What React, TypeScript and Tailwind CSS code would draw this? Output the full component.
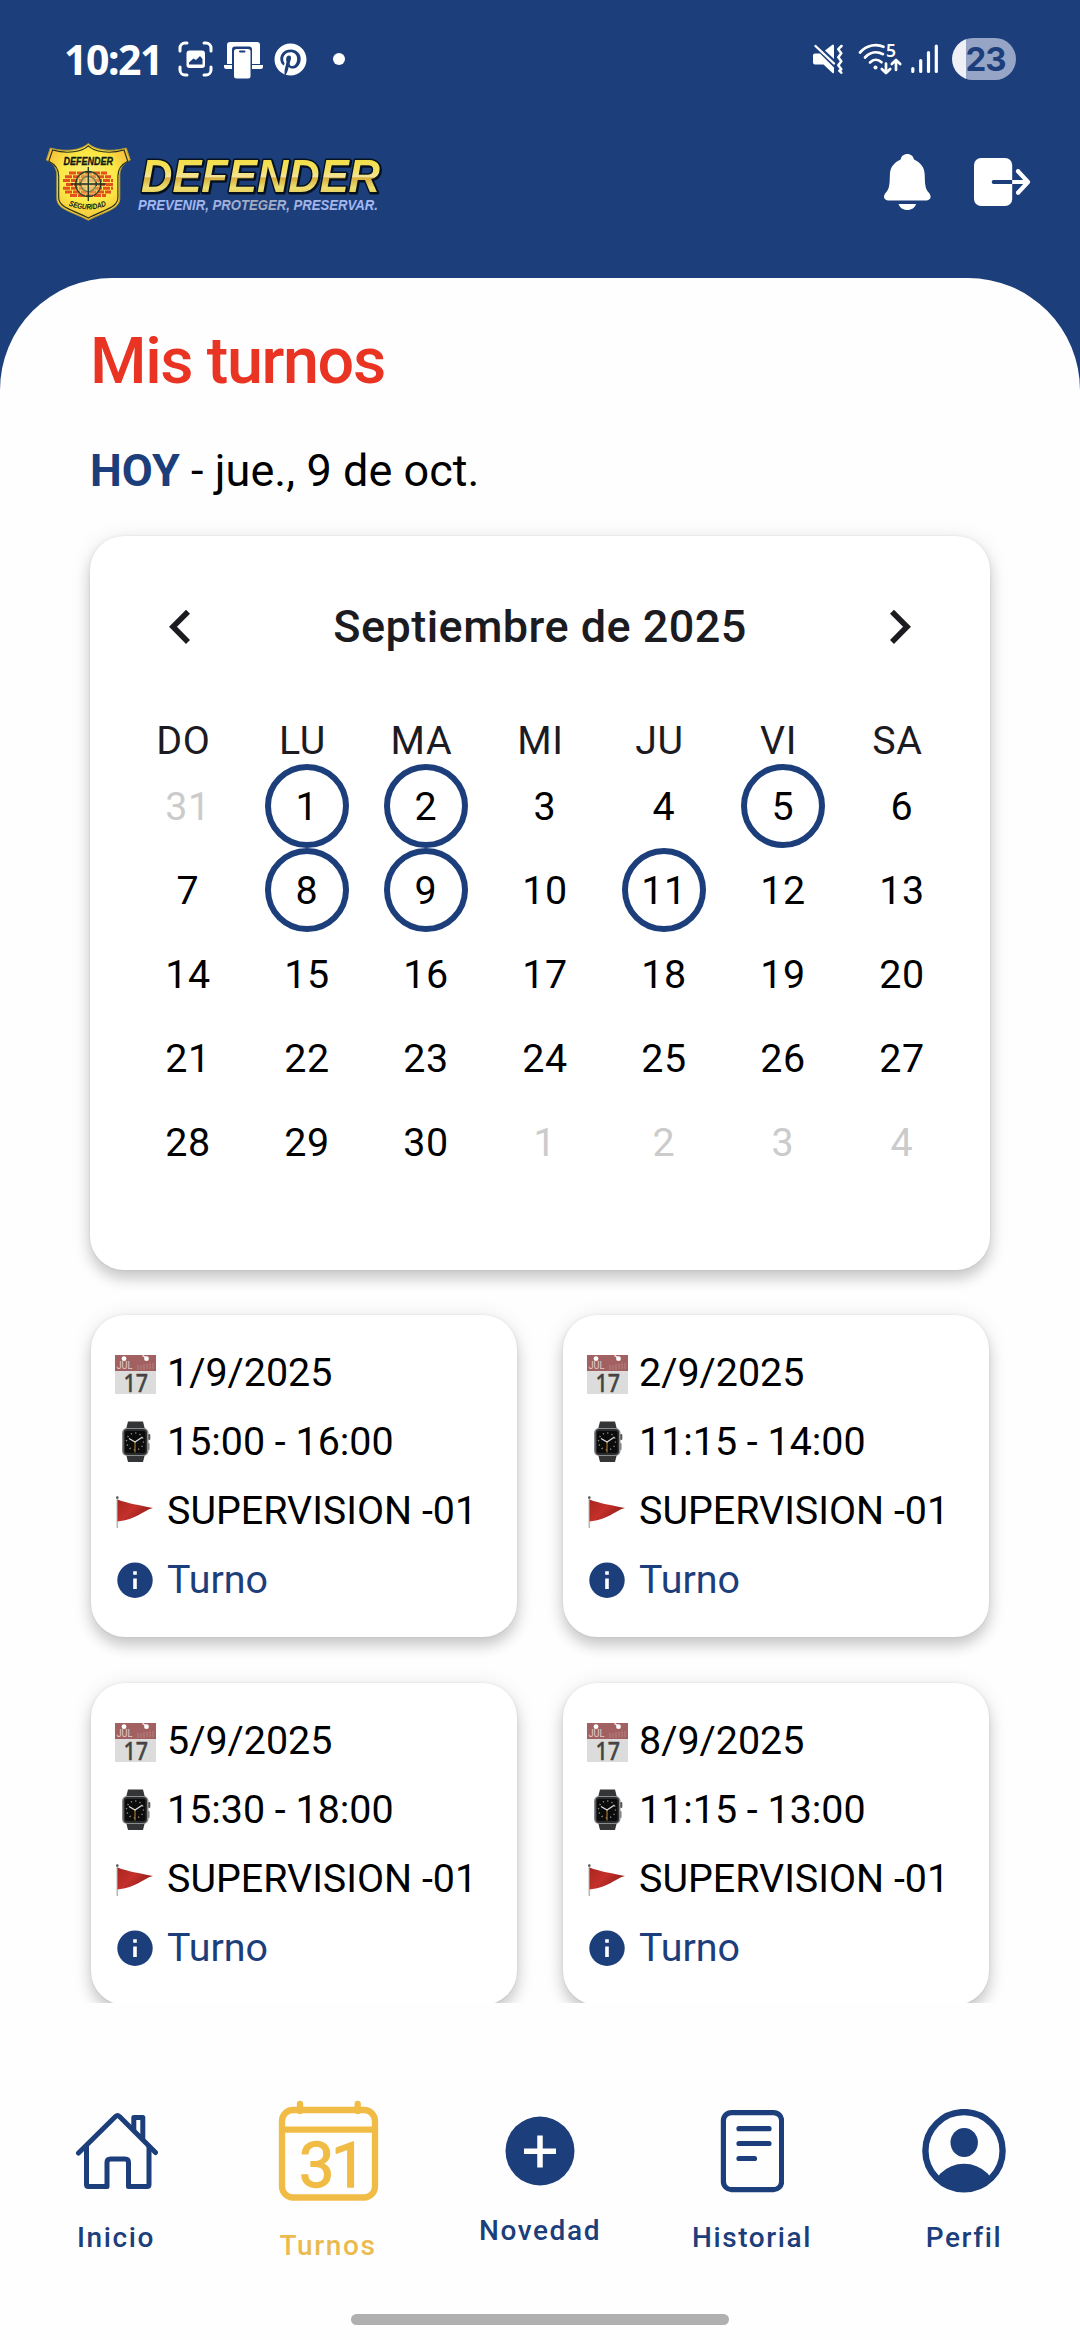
import type { ReactNode } from "react";
import { FaPinterest } from "react-icons/fa";

const NAVY = "#1c3e7b";
const GOLD = "#f0bc45";

const weekdays = ["DO", "LU", "MA", "MI", "JU", "VI", "SA"];
const marked = [1, 2, 5, 8, 9, 11];

type Day = { n: number; muted: boolean };
const days: Day[] = [
  { n: 31, muted: true },
  ...Array.from({ length: 30 }, (_, i) => ({ n: i + 1, muted: false })),
  ...Array.from({ length: 4 }, (_, i) => ({ n: i + 1, muted: true })),
];

const shifts = [
  { date: "1/9/2025", time: "15:00 - 16:00", place: "SUPERVISION -01" },
  { date: "2/9/2025", time: "11:15 - 14:00", place: "SUPERVISION -01" },
  { date: "5/9/2025", time: "15:30 - 18:00", place: "SUPERVISION -01" },
  { date: "8/9/2025", time: "11:15 - 13:00", place: "SUPERVISION -01" },
];

function ScreenshotIcon() {
  return (
    <svg width="36" height="36" viewBox="0 0 36 36" fill="none" stroke="#fff" strokeWidth="3" strokeLinecap="round">
      <path d="M2 10V7a5 5 0 0 1 5-5h2M26 2h2a5 5 0 0 1 5 5v3M33 26v3a5 5 0 0 1-5 5h-2M9 34H7a5 5 0 0 1-5-5v-3" />
      <rect x="8.500" y="9.500" width="18.500" height="17.500" rx="3" fill="#fff" stroke="none" />
      <path d="M11 23.500v-2l4.500-4 2.500 1.500 4-4 2.500 3v5.500z" fill={NAVY} stroke="none" />
    </svg>
  );
}

function LinkDeviceIcon() {
  return (
    <svg width="40" height="38" viewBox="0 0 40 38">
      <path d="M3 3a3 3 0 0 1 3-3h27a3 3 0 0 1 3 3v19H3z" fill="#fff" />
      <path d="M0 23h39v1.500a2.500 2.500 0 0 1-2.500 2.500h-34A2.500 2.500 0 0 1 0 24.500z" fill="#fff" />
      <rect x="8" y="4.500" width="20" height="34" rx="3" fill={NAVY} />
      <rect x="10" y="7" width="16.500" height="29.500" rx="2.500" fill="#fff" />
      <rect x="15" y="8.500" width="6.500" height="2" rx="1" fill={NAVY} />
    </svg>
  );
}

function MuteVibrateIcon() {
  return (
    <svg width="30" height="30" viewBox="0 0 30 30">
      <path d="M0 11.500a2 2 0 0 1 2-2h5L21 23.500v4.800a.9.900 0 0 1-1.500.700L10.500 20.500H2a2 2 0 0 1-2-2z" fill="#fff" />
      <path d="M12 6.500 19.400.800A1 1 0 0 1 21 1.500V15z" fill="#fff" />
      <path d="M2.500 2 21 19.500" stroke="#fff" strokeWidth="2.400" strokeLinecap="round" />
      <path d="M28.500 2l-3.200 3.200 3 4-3 4 3 4-3 4 3 4-2 1.500 2 2" stroke="#fff" strokeWidth="2.500" fill="none" strokeLinecap="round" strokeLinejoin="round" />
    </svg>
  );
}

function WifiIcon() {
  return (
    <svg width="44" height="32" viewBox="0 0 44 32" fill="none" stroke="#fff" strokeWidth="2.700" strokeLinecap="round" strokeLinejoin="round" className="overflow-visible">
      <path d="M2 9.500C9 1.500 19 .800 25.500 3.800M7 14.500c5-5.500 12-6.500 18-3.300M12 19.500c3.500-3.500 8-3.500 11.500-.300" />
      <circle cx="17.500" cy="24.500" r="2" fill="#fff" stroke="none" />
      <path d="M28 20.500v9M23.800 26l4.200 4 4.200-4M38 27V17.500M33.800 21l4.200-4 4.200 4" />
      <text x="28" y="14" fontFamily="Noto Sans" fontWeight="600" fontSize="17.500" fill="#fff" stroke="none">5</text>
    </svg>
  );
}

function SignalIcon() {
  return (
    <svg width="28" height="30" viewBox="0 0 28 30" stroke="#fff" strokeWidth="3.200" strokeLinecap="round">
      <path d="M1.800 24.500V27.400M9.700 16.500V27.400M17.500 8.500V27.400M25.300 2V27.400" />
    </svg>
  );
}

function BrandLogo() {
  const shield =
    "M88.300 143.500c-7 6.500-22 9-38 4.500l-4 12c7 3.500 10.500 8 10.500 15.500v23c0 11 15 13 31.500 21.800 16.500-8.800 31.500-10.800 31.500-21.800v-23c0-7.500 3.500-12 10.500-15.500l-4-12c-16 4.500-31 2-38-4.500z";
  return (
    <svg width="344" height="84" viewBox="44 140 344 84">
      <defs>
        <radialGradient id="shield" cx="50%" cy="45%" r="60%">
          <stop offset="0" stopColor="#fbf08a" />
          <stop offset=".55" stopColor="#fbe845" />
          <stop offset="1" stopColor="#f3b63a" />
        </radialGradient>
        <linearGradient id="gold" x1="0" y1="0" x2="0" y2="1">
          <stop offset=".15" stopColor="#f3df45" />
          <stop offset=".4" stopColor="#f4e06a" />
          <stop offset=".5" stopColor="#f3e49b" />
          <stop offset=".53" stopColor="#d8ae3e" />
          <stop offset=".72" stopColor="#ecdf70" />
          <stop offset="1" stopColor="#e0b43c" />
        </linearGradient>
        <linearGradient id="tag">
          <stop offset="0" stopColor="#a3b9f5" />
          <stop offset=".28" stopColor="#a3b5ea" />
          <stop offset=".5" stopColor="#a3aab8" />
          <stop offset=".72" stopColor="#a3b5ea" />
          <stop offset="1" stopColor="#a3b9f5" />
        </linearGradient>
      </defs>
      <path d={shield} fill="url(#shield)" stroke="#a99a37" strokeWidth="1" />
      <path d={shield} fill="none" stroke="#26301c" strokeWidth="1.200" transform="translate(88.300 182) scale(.94) translate(-88.300 -182)" />
      <g stroke="#e2501f" strokeWidth="3" strokeDasharray="7 1">
        <path d="M69 173h38M65 176.800h46M63 180.600h50M66 184.400h48M63 188.200h50M65 192h46M70 195.600h36" />
      </g>
      <circle cx="88.300" cy="184" r="12.500" fill="#e7b865" fillOpacity=".55" stroke="#26402a" strokeWidth="1.300" />
      <circle cx="88.300" cy="184" r="7.500" fill="#efe09a" fillOpacity=".5" stroke="#5c7a4a" strokeWidth="1.200" />
      <path d="M88.300 167v34M71 184h35" stroke="#1f3520" strokeWidth="1.300" />
      <path d="M76 181v6M80 182v4M96.500 182v4M100.500 181v6M85.500 172h5.500M85.500 196h5.500" stroke="#1f3520" strokeWidth=".9" />
      <text x="63.500" y="164.800" textLength="49.500" lengthAdjust="spacingAndGlyphs" fontFamily="Liberation Sans" fontWeight="700" fontStyle="italic" fontSize="10.400" fill="#101a14" stroke="#101a14" strokeWidth=".3">DEFENDER</text>
      <path id="arc" d="M68.500 205.500q20 8 40-.5" fill="none" />
      <text fontFamily="Liberation Sans" fontWeight="700" fontStyle="italic" fontSize="7.800" fill="#101a14">
        <textPath href="#arc" textLength="39" lengthAdjust="spacingAndGlyphs">SEGURIDAD</textPath>
      </text>
      <text
        x="141"
        y="192"
        textLength="239"
        lengthAdjust="spacingAndGlyphs"
        fontFamily="Liberation Sans"
        fontWeight="700"
        fontStyle="italic"
        fontSize="45.500"
        fill="url(#gold)"
        stroke="#06121f"
        strokeWidth="3"
        strokeLinejoin="round"
        className="drop-shadow-[1.500px_1px_0_#06121f] [paint-order:stroke]"
      >
        DEFENDER
      </text>
      <text x="138" y="210.200" textLength="240" lengthAdjust="spacingAndGlyphs" fontFamily="Liberation Sans" fontWeight="700" fontStyle="italic" fontSize="14.600" fill="url(#tag)">PREVENIR, PROTEGER, PRESERVAR.</text>
    </svg>
  );
}

function BellIcon() {
  return (
    <svg width="48" height="58" viewBox="883 154 48 58" fill="#fff">
      <path d="M907.300 155c3.600 0 6 2.200 6.700 5.600 6.500 3 10.500 7.800 10.700 14.900.3 9 .3 13.500 3.300 17.300 1.600 1.800 2.600 3 2.600 5 0 2.100-1.700 3.600-3.800 3.600h-39c-2.100 0-3.800-1.500-3.800-3.600 0-2 1-3.200 2.600-5 3-3.800 3-8.300 3.300-17.300.2-7.100 4.200-11.900 10.700-14.900.7-3.400 3.100-5.600 6.700-5.600z" />
      <path d="M898.500 205h17.600c-1.200 3.800-4.600 6-8.800 6s-7.600-2.200-8.800-6z" />
    </svg>
  );
}

function LogoutIcon() {
  return (
    <svg width="58" height="50" viewBox="973 157 58 50">
      <rect x="974" y="158" width="38.200" height="48" rx="7" fill="#fff" />
      <path d="M993.500 182h18.700" stroke={NAVY} strokeWidth="4" />
      <circle cx="993.700" cy="182" r="2" fill={NAVY} />
      <path d="M1012.200 182h14M1017.800 171l10.200 11-10.200 11" fill="none" stroke="#fff" strokeWidth="4.200" strokeLinecap="butt" strokeLinejoin="round" />
      <circle cx="1018" cy="171.200" r="2.100" fill="#fff" />
      <circle cx="1018" cy="192.800" r="2.100" fill="#fff" />
    </svg>
  );
}

function Chevron({ flip = false }: { flip?: boolean }) {
  return (
    <svg width="22" height="36" viewBox="0 0 22 36" className={flip ? "-scale-x-100" : ""}>
      <path d="M19 2.700 4 17.800 19 33" fill="none" stroke="#1c1b1f" strokeWidth="5.600" />
    </svg>
  );
}

function CalendarEmoji() {
  return (
    <svg width="42" height="42" viewBox="0 0 42 42" className="overflow-visible">
      <rect x="0" y="3" width="41" height="39" fill="#dcdcdc" />
      <rect x="0" y="3" width="41" height="16" fill="#a26061" />
      <circle cx="9" cy="6.700" r="2.400" fill="#fff" />
      <circle cx="31.500" cy="6.700" r="2.400" fill="#fff" />
      <path d="M27.500 3.500l4 2.500" stroke="#fff" strokeWidth="1.200" />
      <path d="M23 13v5M26 13v5M29 12v6M32 12v5M35 11v6M38 11v6" stroke="#b98283" strokeWidth="1" />
      <text x="1.500" y="17.300" textLength="16" lengthAdjust="spacingAndGlyphs" fontFamily="Roboto" fontSize="11.500" fill="#e2cccc">JUL</text>
      <text x="8.500" y="39.700" textLength="24.500" lengthAdjust="spacingAndGlyphs" fontFamily="Noto Sans" fontWeight="500" fontSize="25.500" fill="#444" stroke="#444" strokeWidth=".4">17</text>
    </svg>
  );
}

function WatchEmoji() {
  return (
    <svg width="42" height="42" viewBox="0 0 42 42">
      <path d="M13 .500h15l2 8H11zM11 33h19l-2 8H13z" fill="#333537" />
      <rect x="33" y="13" width="2.300" height="6" rx="1" fill="#555" />
      <rect x="33" y="22" width="1.500" height="7" rx=".7" fill="#777" />
      <rect x="7" y="7" width="26.500" height="28" rx="5" fill="#8a8d90" />
      <rect x="8.500" y="8" width="23.500" height="26" rx="4" fill="#2b2c2e" />
      <rect x="10" y="10" width="20.500" height="22" rx="2" fill="#0b0b0c" />
      <circle cx="20" cy="20.500" r="8.500" fill="none" stroke="#999" strokeWidth="1.300" strokeDasharray="1.200 3.250" />
      <path d="M20 20.500v11" stroke="#a8762a" strokeWidth="1.200" />
      <path d="M14 17.500l6 3.500 7.500-5" stroke="#ddd" strokeWidth="1.300" fill="none" />
    </svg>
  );
}

function FlagEmoji() {
  return (
    <svg width="42" height="42" viewBox="0 0 42 42">
      <defs>
        <linearGradient id="flag" x1="0" y1="0" x2="1" y2=".6">
          <stop offset="0" stopColor="#a82620" />
          <stop offset=".5" stopColor="#c4302a" />
          <stop offset="1" stopColor="#8f1d18" />
        </linearGradient>
      </defs>
      <path d="M2.300 7v31" stroke="#b9b9bb" strokeWidth="1.600" />
      <circle cx="2.300" cy="7.500" r="1.300" fill="#555" />
      <path d="M2.500 9.500C13 13.500 24 15 38 18 29 20 21 30 2.500 31.500z" fill="url(#flag)" />
    </svg>
  );
}

function InfoIcon() {
  return (
    <svg width="42" height="42" viewBox="0 0 42 42">
      <circle cx="20" cy="21.200" r="17.700" fill={NAVY} />
      <path d="M18.200 12.300h3.600v3.500h-3.600zM18.200 19.500h3.600v10.500h-3.600z" fill="#fff" />
    </svg>
  );
}

function HomeIcon() {
  return (
    <svg width="84" height="84" viewBox="74.500 2109 84 84" fill="none" stroke={NAVY} strokeWidth="5" strokeLinecap="round" strokeLinejoin="round">
      <path d="M79 2153 116 2116.500q2-1.900 4 0L156 2152.500" />
      <path d="M134.300 2130v-12.500h9v20.500" />
      <path d="M87 2147v37.500q0 2 2 2h18.500v-24q0-3.500 3.500-3.500h14.500q3.500 0 3.500 3.500v24h18.500q2 0 2-2V2147" />
    </svg>
  );
}

function TurnosIcon() {
  return (
    <svg width="100" height="100" viewBox="278 2101 100 100" fill="none" stroke={GOLD} strokeWidth="6.300" strokeLinecap="round" className="overflow-visible">
      <rect x="282" y="2110" width="93" height="87.500" rx="11" />
      <path d="M282 2129.700h93M300 2104v7M357.700 2104v7" />
      <text x="299 331" y="2187" fontFamily="Roboto" fontWeight="400" fontSize="63" fill={GOLD} strokeWidth="1.300" strokeLinejoin="round">31</text>
    </svg>
  );
}

function PlusIcon() {
  return (
    <svg width="70" height="70" viewBox="504 2115.500 70 70">
      <circle cx="539" cy="2150.500" r="34.500" fill={NAVY} />
      <path d="M523 2150.700h32M539 2135v32" stroke="#fff" strokeWidth="5.500" />
    </svg>
  );
}

function HistoryIcon() {
  return (
    <svg width="64" height="84" viewBox="720 2109 64 84" fill="none" stroke={NAVY} strokeWidth="5.200" strokeLinecap="round">
      <rect x="723.400" y="2112.600" width="58.200" height="77" rx="8" />
      <path d="M739 2128.700h30M739 2143.500h30M739 2158.500h15.500" />
    </svg>
  );
}

function ProfileIcon() {
  return (
    <svg width="84" height="84" viewBox="921 2109 84 84">
      <defs>
        <clipPath id="face">
          <circle cx="963" cy="2150.700" r="41" />
        </clipPath>
      </defs>
      <circle cx="963" cy="2150.700" r="38.600" fill="none" stroke={NAVY} strokeWidth="6.400" />
      <ellipse cx="963.200" cy="2142.500" rx="13.700" ry="14.500" fill={NAVY} />
      <ellipse cx="963" cy="2196" rx="33" ry="32.300" fill={NAVY} clipPath="url(#face)" />
    </svg>
  );
}

function ShiftRow({ icon, children }: { icon: ReactNode; children: ReactNode }) {
  return (
    <div className="flex h-[69px] items-center gap-[10px] whitespace-nowrap">
      {icon}
      <span>{children}</span>
    </div>
  );
}

function NavItem({ icon, label, className = "" }: { icon: ReactNode; label: string; className?: string }) {
  return (
    <button className={`flex w-[212px] flex-col items-center gap-[28px] ${className}`}>
      {icon}
      <span className="text-[28px] leading-[34px] font-medium tracking-[1.600px]">{label}</span>
    </button>
  );
}

const cardShadow = "shadow-[0_9px_14px_rgba(0,0,0,0.17),0_2px_22px_rgba(0,0,0,0.09),0_0_3px_rgba(0,0,0,0.08)]";

export default function App() {
  return (
    <div className="flex h-[2340px] w-[1080px] flex-col overflow-hidden bg-[#fefefe] font-['Roboto',sans-serif] text-black">
      <div className="bg-[#1c3e7b]">
        <div className="flex h-[118px] items-center justify-between pr-[64px] pl-[64px]">
          <div className="flex items-center">
            <span className="w-[114px] font-['Noto_Sans',sans-serif] text-[41px] leading-[56px] font-bold tracking-[-1.500px] text-white">10:21</span>
            <ScreenshotIcon />
            <div className="mt-[3px] ml-[10px]"><LinkDeviceIcon /></div>
            <FaPinterest className="ml-[10px] size-[33px] text-white" />
            <div className="ml-[26px] size-[12px] rounded-full bg-white" />
          </div>
          <div className="flex items-center">
            <MuteVibrateIcon />
            <div className="ml-[15px]"><WifiIcon /></div>
            <div className="ml-[9px]"><SignalIcon /></div>
            <div className="ml-[13px] flex h-[42px] w-[64px] items-center justify-center rounded-full bg-linear-to-r from-[#eef0f6] from-[22%] to-[#96a5c5] to-[22%] pl-[3px] font-['Inter',sans-serif] text-[33px] leading-[42px] font-bold tracking-[-1px] text-[#1c3e7b]">
              23
            </div>
          </div>
        </div>
        <div className="flex h-[128px] items-center justify-between pr-[49px] pl-[44px]">
          <BrandLogo />
          <div className="flex items-center gap-[42px]">
            <BellIcon />
            <LogoutIcon />
          </div>
        </div>
        <div className="h-[32px]" />
      </div>

      <div className="h-[1725px] shrink-0 overflow-hidden bg-linear-to-b from-[#1c3e7b] from-[120px] to-[#fefefe] to-[120px]">
        <main className="h-full rounded-t-[112px] bg-[#fefefe] pt-[38px]">
          <h1 className="ml-[90px] text-[64.700px] leading-[90px] font-medium tracking-[-1.400px] text-[#e93323]">Mis turnos</h1>
          <p className="mt-[35px] ml-[90px] text-[45px] leading-[60px] tracking-[0.050px]">
            <span className="font-bold text-[#1c3e7b]">HOY</span> - jue., 9 de oct.
          </p>

          <section className={`mx-[90px] mt-[35px] h-[734px] rounded-[34px] bg-white pt-[61px] ${cardShadow}`}>
            <div className="flex h-[60px] items-center justify-between px-[79px] text-[45px] font-medium tracking-[0.450px] text-[#1c1b1f]">
              <Chevron />
              <span>Septiembre de 2025</span>
              <Chevron flip />
            </div>
            <div className="mt-[61px] ml-[34px] grid w-[833px] grid-cols-7 text-center text-[39.400px] leading-[46px] tracking-[0.700px] text-[#1c1b1f]">
              {weekdays.map((d) => (
                <span key={d}>{d}</span>
              ))}
            </div>
            <div className="ml-[38.500px] grid w-[833px] grid-cols-7 justify-items-center text-[39.400px] leading-[46px] tracking-[0.700px]">
              {days.map(({ n, muted }, i) => (
                <div
                  key={i}
                  className={`flex size-[84px] items-center justify-center rounded-full pt-[2px] ${muted ? "text-[#cbcbcb]" : "text-black"} ${
                    !muted && marked.includes(n) ? "border-[6px] border-[#1c3e7b]" : ""
                  }`}
                >
                  {n}
                </div>
              ))}
            </div>
          </section>

          <section className="mx-[91px] mt-[45px] grid grid-cols-[426px_426px] gap-x-[46px] gap-y-[46px]">
            {shifts.map((s) => (
              <article key={s.date} className={`h-[322px] rounded-[34px] bg-white px-[24px] pt-[23px] text-[39.400px] ${cardShadow}`}>
                <ShiftRow icon={<CalendarEmoji />}>{s.date}</ShiftRow>
                <ShiftRow icon={<WatchEmoji />}>{s.time}</ShiftRow>
                <ShiftRow icon={<FlagEmoji />}>{s.place}</ShiftRow>
                <ShiftRow icon={<InfoIcon />}>
                  <span className="text-[#1c3e7b]">Turno</span>
                </ShiftRow>
              </article>
            ))}
          </section>
        </main>
      </div>

      <nav className="flex h-[311px] shrink-0 items-start px-[10px] pt-[98px] text-[#1c3e7b]">
        <NavItem icon={<HomeIcon />} label="Inicio" className="mt-[8px]" />
        <NavItem icon={<TurnosIcon />} label="Turnos" className="text-[#eabb50]" />
        <NavItem icon={<PlusIcon />} label="Novedad" className="mt-[15px]" />
        <NavItem icon={<HistoryIcon />} label="Historial" className="mt-[8px]" />
        <NavItem icon={<ProfileIcon />} label="Perfil" className="mt-[8px]" />
      </nav>
      <div className="mx-auto h-[11px] w-[378px] shrink-0 rounded-full bg-[#b0b0b0]" />
    </div>
  );
}
